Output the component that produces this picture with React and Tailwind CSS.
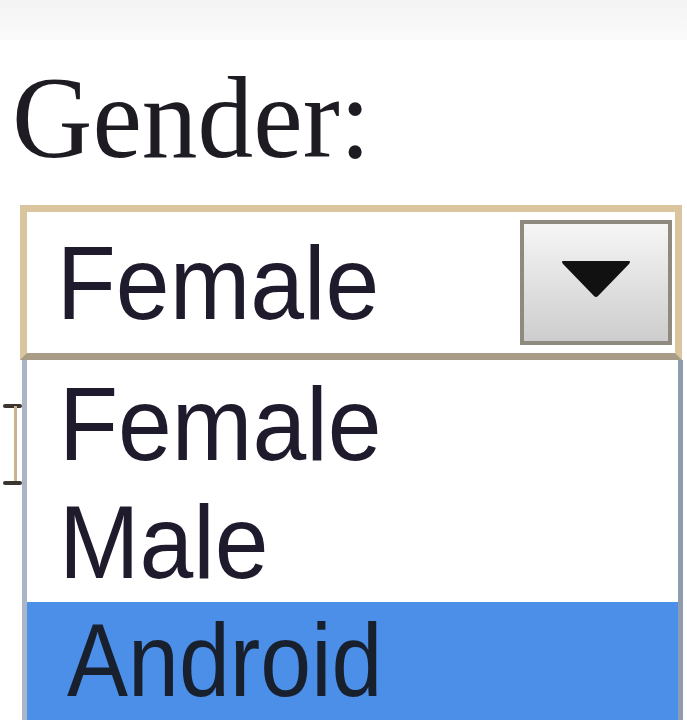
import React from 'react'

const options = ['Female', 'Male', 'Android']

function Arrow() {
  return (
    <svg width="70" height="38" viewBox="0 0 70 38">
      <path d="M2 1 L68 1 Q70 1 68 4 L37 36 Q35 38 33 36 L2 4 Q0 1 2 1 Z" fill="#111111" />
    </svg>
  )
}

export default function App() {
  return (
    <div className="w-[687px] h-[720px] bg-white overflow-hidden">
      {/* top band */}
      <div className="h-10 bg-gradient-to-b from-[#f4f4f4] to-[#fafafa]" />

      {/* label */}
      <div className="pl-[12px] mt-[20px] h-[116px] font-['Liberation_Serif',serif] text-[116px] leading-none text-[#1e1c22]">
        <span className="inline-block origin-left scale-x-[0.96]">Gender:</span>
      </div>

      {/* select box */}
      <div className="ml-[20px] mt-[29px] w-[662px] h-[155px] border-[7px] border-[#dbc59f] border-b-[#a99c86] bg-white flex items-center font-['Liberation_Sans',sans-serif]">
        <span className="pl-[32px] text-[104px] leading-none text-[#1f1a2c] inline-block origin-left scale-x-[0.93]">
          Female
        </span>
        <div className="ml-auto mr-[3px] w-[152px] h-[125px] border-[4px] border-[#8f8a80] bg-gradient-to-b from-[#f6f6f6] to-[#cdcdcd] flex justify-center pt-[36px]">
          <Arrow />
        </div>
      </div>

      {/* open list */}
      <div className="flex h-[360px]">
        <div className="w-[22px] relative">
          <div className="absolute left-[3px] top-[44px] w-[19px] h-[4px] bg-[#3a3530] rounded-sm" />
          <div className="absolute left-[14px] top-[46px] w-[3px] h-[76px] bg-[#c9b48f]" />
          <div className="absolute left-[3px] top-[121px] w-[19px] h-[4px] bg-[#3a3530] rounded-sm" />
        </div>
        <div className="w-[661px] border-x-[5px] border-l-[#aab5c6] border-r-[#8e9bb0] bg-white pt-[6px] font-['Liberation_Sans',sans-serif]">
          {options.map((o) =>
            o === 'Android' ? (
              <div key={o} className="h-[118px] bg-[#4c8fe8] pl-[40px] text-[104px] leading-[117px] text-[#18202e]">
                <span className="inline-block origin-left scale-x-[0.88]">{o}</span>
              </div>
            ) : (
              <div key={o} className="h-[118px] pl-[32px] text-[104px] leading-[117px] text-[#1f1a2c]">
                <span className="inline-block origin-left scale-x-[0.93]">{o}</span>
              </div>
            )
          )}
        </div>
      </div>
    </div>
  )
}
